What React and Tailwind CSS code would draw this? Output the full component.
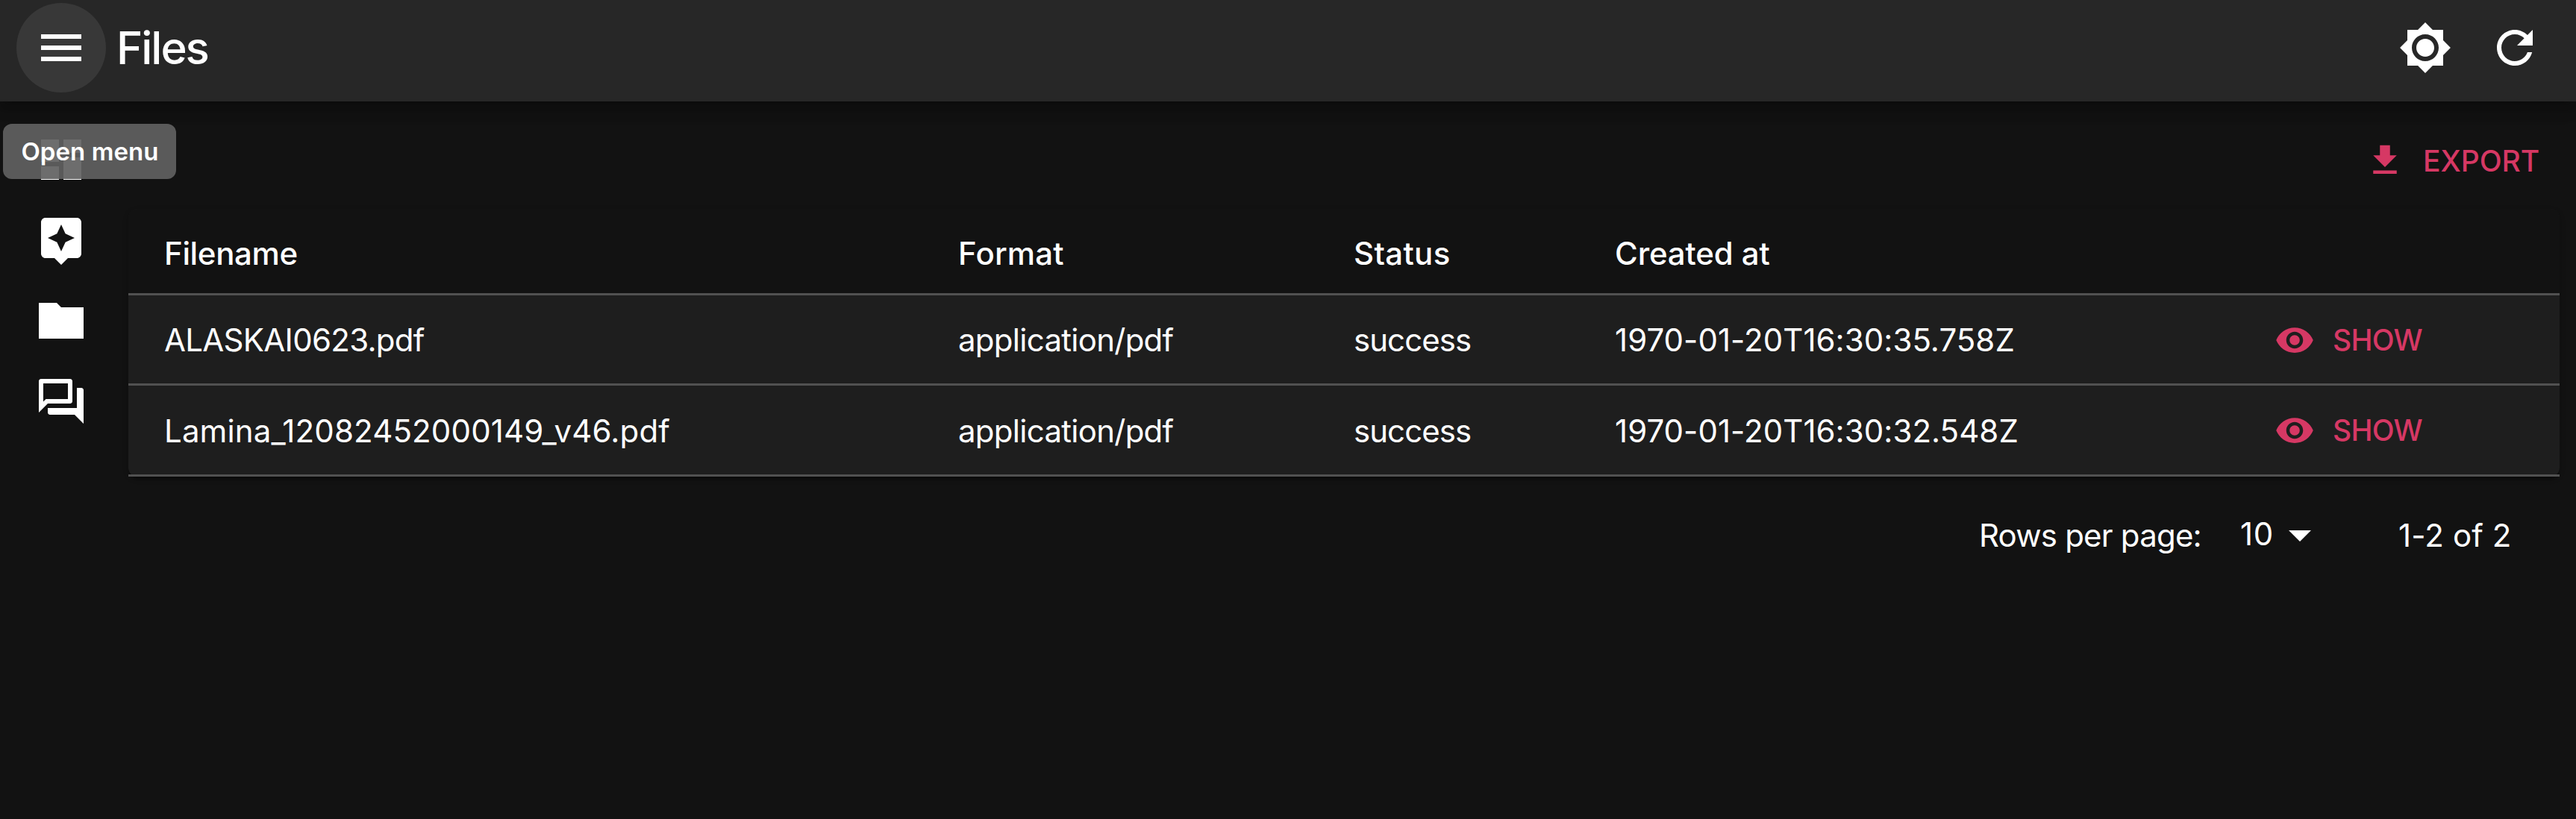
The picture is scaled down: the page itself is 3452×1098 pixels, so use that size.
const ICONS = {
  menu: "M3 18h18v-2H3v2zm0-5h18v-2H3v2zm0-7v2h18V6H3z",
  dashboard: "M3 13h8V3H3v10zm0 8h8v-6H3v6zm10 0h8V11h-8v10zm0-18v6h8V3h-8z",
  assistant:
    "M19 2H5c-1.11 0-2 .9-2 2v14c0 1.1.89 2 2 2h4l3 3 3-3h4c1.1 0 2-.9 2-2V4c0-1.1-.9-2-2-2zm-5.12 10.88L12 17l-1.88-4.12L6 11l4.12-1.88L12 5l1.88 4.12L18 11l-4.12 1.88z",
  folder: "M10 4H2v16h20V6H12l-2-2z",
  chat: "M15 4v7H5.17L4 12.17V4h11m1-2H3c-.55 0-1 .45-1 1v14l4-4h10c.55 0 1-.45 1-1V3c0-.55-.45-1-1-1zm5 4h-2v9H6v2c0 .55.45 1 1 1h11l4 4V7c0-.55-.45-1-1-1z",
  light:
    "M20 8.69V4h-4.69L12 .69 8.69 4H4v4.69L.69 12 4 15.31V20h4.69L12 23.31 15.31 20H20v-4.69L23.31 12 20 8.69zM12 18c-3.31 0-6-2.69-6-6s2.69-6 6-6 6 2.69 6 6-2.69 6-6 6zm0-10c-2.21 0-4 1.79-4 4s1.79 4 4 4 4-1.79 4-4-1.79-4-4-4z",
  refresh:
    "M17.65 6.35C16.2 4.9 14.21 4 12 4c-4.42 0-7.99 3.58-7.99 8s3.57 8 7.99 8c3.73 0 6.84-2.55 7.73-6h-2.08c-.82 2.33-3.04 4-5.65 4-3.31 0-6-2.69-6-6s2.69-6 6-6c1.66 0 3.14.69 4.22 1.78L13 11h7V4l-2.35 2.35z",
  download: "M19 9h-4V3H9v6H5l7 7 7-7zM5 18v2h14v-2H5z",
  eye: "M12 4.5C7 4.5 2.73 7.61 1 12c1.73 4.39 6 7.5 11 7.5s9.27-3.11 11-7.5c-1.73-4.39-6-7.5-11-7.5zM12 17c-2.76 0-5-2.24-5-5s2.24-5 5-5 5 2.24 5 5-2.24 5-5 5zm0-8c-1.66 0-3 1.34-3 3s1.34 3 3 3 3-1.34 3-3-1.34-3-3-3z",
  down: "M7 10l5 5 5-5z",
};

function Icon({ name, className = "size-[72px]" }) {
  return (
    <svg viewBox="0 0 24 24" fill="currentColor" className={`shrink-0 ${className}`}>
      <path d={ICONS[name]} />
    </svg>
  );
}

const FILES = [
  {
    name: "ALASKAI0623.pdf",
    nameTracking: "tracking-[-0.017em]",
    format: "application/pdf",
    status: "success",
    created: "1970-01-20T16:30:35.758Z",
    rowSize: "h-[121px] leading-[119px]",
  },
  {
    name: "Lamina_12082452000149_v46.pdf",
    nameTracking: "tracking-[0.0034em]",
    format: "application/pdf",
    status: "success",
    created: "1970-01-20T16:30:32.548Z",
    rowSize: "h-[122px] leading-[121px]",
  },
];

const GRID = "grid grid-cols-[1064px_530px_350px_884px_1fr] border-b-[3px] border-[#515151] pl-12";

function AppBar() {
  return (
    <header className="relative flex h-[136px] items-start justify-between bg-[#272727] px-[22px] pt-1 shadow-[0_6px_12px_-3px_rgba(0,0,0,0.2),0_12px_15px_0_rgba(0,0,0,0.14),0_3px_30px_0_rgba(0,0,0,0.12)]">
      <div className="flex items-center">
        <button className="flex size-[120px] items-center justify-center rounded-full bg-[#383838]">
          <Icon name="menu" />
        </button>
        <h1 className="ml-[14px] text-[60px] leading-[120px] font-medium tracking-[-0.0343em]">Files</h1>
        <div className="absolute top-[166px] left-1 flex h-[74px] w-[232px] items-center justify-center rounded-xl bg-[rgba(97,97,97,0.92)] pt-0.5 pl-px text-[33px] font-semibold tracking-[0.002em]">
          Open menu
        </div>
      </div>
      <div className="flex">
        <button className="flex size-[120px] items-center justify-center">
          <Icon name="light" />
        </button>
        <button className="flex size-[120px] items-center justify-center">
          <Icon name="refresh" />
        </button>
      </div>
    </header>
  );
}

function Sidebar() {
  return (
    <nav className="flex w-[172px] shrink-0 flex-col gap-9 pt-[42px] pl-[46px]">
      <Icon name="dashboard" />
      <Icon name="assistant" />
      <Icon name="folder" />
      <Icon name="chat" />
    </nav>
  );
}

function FileTable() {
  return (
    <div className="rounded-xl bg-[#1e1e1e] shadow-[0_6px_3px_-3px_rgba(0,0,0,0.2),0_3px_3px_0_rgba(0,0,0,0.14),0_3px_9px_0_rgba(0,0,0,0.12)]">
      <div className={`${GRID} h-[116px] rounded-t-xl bg-[#121212] leading-[120px] font-medium`}>
        <span className="tracking-[-0.0085em]">Filename</span>
        <span className="tracking-[0.0037em]">Format</span>
        <span className="tracking-[0.0079em]">Status</span>
        <span className="tracking-[-0.0036em]">Created at</span>
      </div>
      {FILES.map((file) => (
        <div key={file.name} className={`${GRID} ${file.rowSize}`}>
          <span className={file.nameTracking}>{file.name}</span>
          <span className="tracking-[-0.0174em]">{file.format}</span>
          <span className="tracking-[-0.0224em]">{file.status}</span>
          <span className="tracking-[0.001em]">{file.created}</span>
          <button className="flex h-[119px] items-center gap-6 text-[39px] font-[450] tracking-[-0.02em] text-[#d63864]">
            <Icon name="eye" className="size-[54px]" />
            <span className="pt-px leading-[60px]">SHOW</span>
          </button>
        </div>
      ))}
    </div>
  );
}

function Pagination() {
  return (
    <div className="flex items-center pt-[42px] pl-[2480px] leading-[60px] whitespace-nowrap">
      <span className="w-[350px] pt-0.5 tracking-[-0.019em]">Rows per page:</span>
      <span className="-mt-0.5 w-[44px] tracking-[0.017em]">10</span>
      <Icon name="down" className="size-[72px]" />
      <span className="ml-24 pt-0.5 tracking-[0.0029em]">1-2 of 2</span>
    </div>
  );
}

export default function App() {
  return (
    <div className="h-[1098px] w-[3452px] overflow-hidden bg-[#121212] font-[Inter,sans-serif] text-[42px] text-white">
      <AppBar />
      <div className="flex">
        <Sidebar />
        <main className="w-[3258px]">
          <div className="flex h-36 items-center justify-end pt-[14px]">
            <button className="flex w-[261px] items-center gap-6 text-[39px] font-[450] tracking-[-0.001em] text-[#d63864]">
              <Icon name="download" className="size-[54px]" />
              <span className="pt-0.5">EXPORT</span>
            </button>
          </div>
          <FileTable />
          <Pagination />
        </main>
      </div>
    </div>
  );
}
